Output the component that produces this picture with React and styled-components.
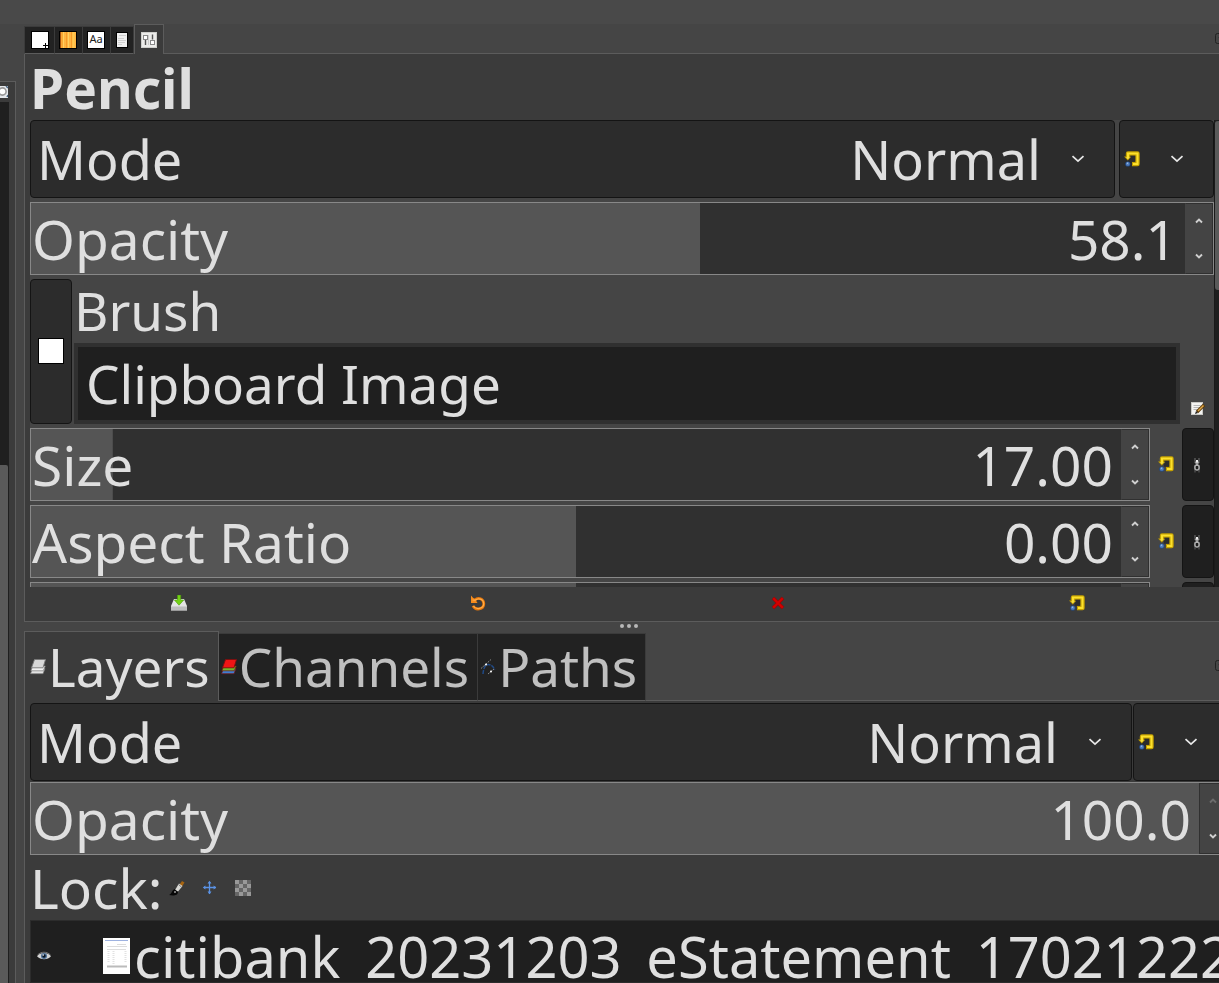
import React, { useState } from "react";
import styled, { createGlobalStyle } from "styled-components";

const GlobalStyle = createGlobalStyle`
  * {
    box-sizing: border-box;
  }

  body {
    margin: 0;
    background: #454545;
    overflow: hidden;
  }

  button, input, select {
    font: inherit;
    color: inherit;
    margin: 0;
    padding: 0;
    border: 0;
    background: none;
    outline: none;
  }

  svg {
    display: block;
    flex: none;
  }
`;

const Shell = styled.div`
  display: flex;
  flex-direction: column;
  height: 100vh;
  overflow: hidden;
  background: #454545;
  color: #dfdfdf;
  font-family: "Noto Sans", sans-serif;
  font-size: 55px;
  line-height: 66px;
  white-space: nowrap;
`;

const TopBar = styled.div`
  flex: none;
  height: 24px;
  background: #494949;
`;

const Columns = styled.div`
  display: flex;
  flex: 1;
  min-height: 0;
  gap: 8px;
`;

/* Left dock, only its right edge is on screen */
const SideDock = styled.aside`
  display: flex;
  flex-direction: column;
  flex: none;
  width: 16px;
  margin-top: 57px;
  padding-right: 6px;
  background: #3b3b3b;
  border: solid #5c5c5c;
  border-width: 1px 1px 0 0;
`;

const SideTab = styled.div`
  height: 20px;
  padding-top: 4px;
  background: #3b3b3b;
`;

const SideTrack = styled.div`
  flex: 1;
  padding-top: 363px;
  background: #1f1f1f;
  border-right: 1px solid #1f1f1f;
`;

const SideThumb = styled.div`
  height: 100%;
  background: #5a5a5a;
  border-radius: 0 2px 0 0;
`;

const Docks = styled.main`
  display: flex;
  flex-direction: column;
  flex: 1;
  min-width: 0;
  margin-right: -14px;
`;

const TabStrip = styled.div`
  display: flex;
  flex: none;
`;

const TabFiller = styled.div`
  display: flex;
  flex: 1;
  align-items: center;
  justify-content: flex-end;
  padding-right: 5px;
  border-bottom: 1px solid #5c5c5c;
`;

const IconTab = styled.button`
  display: flex;
  align-items: center;
  height: ${props => props.$active ? "30px" : "28px"};
  margin-top: ${props => props.$active ? "0" : "2px"};
  padding: ${props => props.$active ? "0 6px" : "0 5px 0 4px"};
  background: ${props => props.$active ? "#3b3b3b" : "#222"};
  border: solid ${props => props.$active ? "#5c5c5c" : "#3b3b3b"};
  border-width: ${props => props.$active ? "1px 1px 0" : "1px 1px 1px 0"};
  border-bottom-color: #5c5c5c;

  &:first-child {
    padding-left: 6px;
    border-left-width: 1px;
  }
`;

const TextTab = styled.button`
  display: flex;
  align-items: center;
  height: ${props => props.$active ? "70px" : "68px"};
  margin-top: ${props => props.$active ? "0" : "2px"};
  padding: 0 8px 0 ${props => props.$active ? "5px" : "2px"};
  gap: 2px;
  font-size: 53px;
  color: ${props => props.$active ? "#dfdfdf" : "#c0c0c0"};
  background: ${props => props.$active ? "#3b3b3b" : "#222"};
  border: solid ${props => props.$active ? "#5c5c5c" : "#3b3b3b"};
  border-width: ${props => props.$active ? "1px 1px 0" : "1px 1px 1px 0"};
  border-bottom-color: #5c5c5c;
`;

const ToolPage = styled.section`
  flex: none;
  padding: 0 5px;
  background: #3b3b3b;
  border: solid #5c5c5c;
  border-width: 0 0 1px 1px;
`;

const LayerPage = styled.section`
  display: flex;
  flex-direction: column;
  flex: 1;
  min-height: 0;
  padding: 2px 5px 0;
  gap: 1px;
  background: #3b3b3b;
  border-left: 1px solid #5c5c5c;
`;

const Title = styled.h1`
  margin: 0;
  padding-top: 1px;
  font-size: 55px;
  font-weight: 700;
  line-height: 65px;
`;

const ScrollArea = styled.div`
  display: flex;
  height: 467px;
  overflow: hidden;
`;

const Options = styled.div`
  display: flex;
  flex-direction: column;
  flex: 1;
  min-width: 0;
  gap: 4px;
  background: #454545;
`;

const ScrollTrack = styled.div`
  flex: none;
  width: 14px;
  background: #1f1f1f;
  border-left: 1px solid #1a1a1a;
`;

const ScrollThumb = styled.div`
  height: 170px;
  background: #5a5a5a;
  border: 1px solid #1a1a1a;
  border-width: 1px 1px 0 0;
  border-radius: 3px;
`;

const Row = styled.div`
  display: flex;
  flex: none;
  gap: ${props => props.$gap || 0}px;
`;

const ModeBox = styled.div`
  display: flex;
  flex: 1;
  align-items: center;
  min-width: 0;
  height: 78px;
  padding: 0 29px 0 6px;
  font-size: 54px;
  background: #2c2c2c;
  border: 1px solid #141414;
  border-radius: 4px;
`;

const ModeSelect = styled.select`
  flex: 1;
  min-width: 0;
  height: 76px;
  margin-right: 30px;
  appearance: none;
  text-align: right;
  text-align-last: right;

  option {
    background: #2c2c2c;
  }
`;

const ModeReset = styled.button`
  display: flex;
  align-items: center;
  justify-content: space-between;
  flex: none;
  width: 95px;
  height: 78px;
  padding: 0 29px 0 4px;
  background: #2c2c2c;
  border: 1px solid #141414;
  border-radius: 4px;
`;

const ScaleBox = styled.div`
  display: flex;
  flex: 1;
  min-width: 0;
  height: 73px;
  background: #303030;
  border: 1px solid #888;
`;

const ScaleFill = styled.div`
  display: flex;
  flex: 1;
  align-items: center;
  min-width: 0;
  padding: 0 8px 0 1px;
  background: linear-gradient(#555, #555) 0 0 / ${props => props.$fill}% 100% no-repeat;
`;

const ScaleInput = styled.input`
  flex: 1;
  min-width: 0;
  height: 71px;
  text-align: right;
`;

const Steppers = styled.div`
  display: flex;
  flex-direction: column;
  flex: none;
  width: 28px;
  background: #444;
  border: 1px solid #303030;
  border-left-color: ${props => props.$full ? "#303030" : "#444"};
`;

const Stepper = styled.button`
  display: flex;
  flex: 1;
  align-items: center;
  justify-content: center;
  color: ${props => props.disabled ? "#6c6c6c" : "#cfcfcf"};
`;

const BrushButton = styled.button`
  display: flex;
  align-items: center;
  justify-content: center;
  flex: none;
  width: 42px;
  padding-bottom: 2px;
  background: #2c2c2c;
  border: 1px solid #141414;
  border-radius: 4px;
`;

const BrushSwatch = styled.span`
  width: 26px;
  height: 26px;
  background: #fff;
  border: 1px solid #000;
`;

const BrushField = styled.div`
  display: flex;
  flex-direction: column;
  flex: 1;
  min-width: 0;
  font-size: 53px;

  label {
    line-height: 64px;
  }
`;

const BrushInput = styled.input`
  height: 81px;
  padding: 0 8px;
  background: #1f1f1f;
  border: 4px solid #303030;
`;

const FlatButton = styled.button`
  display: flex;
  align-items: ${props => props.$low ? "flex-end" : "center"};
  justify-content: center;
  flex: none;
  width: ${props => props.$width}px;
  padding-bottom: ${props => props.$low ? "8px" : "2px"};
`;

const ChainButton = styled.button`
  display: flex;
  align-items: center;
  flex: none;
  width: 32px;
  padding-left: 9px;
  background: #1f1f1f;
  border: 1px solid #141414;
  border-radius: 4px;
`;

const ActionBar = styled.div`
  display: grid;
  grid-template-columns: repeat(4, 1fr);
  height: 34px;

  button {
    display: flex;
    align-items: center;
    justify-content: center;
    padding: 0 2px 2px 0;
  }
`;

const PaneHandle = styled.div`
  display: flex;
  align-items: center;
  justify-content: center;
  flex: none;
  gap: 3px;
  height: 9px;
  padding-bottom: 1px;

  span {
    width: 4px;
    height: 4px;
    border-radius: 50%;
    background: #b8b8b8;
  }
`;

const LockRow = styled.div`
  display: flex;
  align-items: center;
  flex: none;
  height: 63px;
  line-height: 64px;

  button {
    display: flex;
    width: 16px;
    margin-right: 17px;
  }
`;

const LockLabel = styled.span`
  margin-right: 6px;
`;

const LayerList = styled.ul`
  flex: 1;
  min-height: 0;
  margin: 0;
  padding: 0;
  list-style: none;
  overflow: hidden;
  background: #1f1f1f;
  border: 1px solid #2c2c2c;
`;

const LayerItem = styled.li`
  display: flex;
  align-items: center;
  height: 70px;
  font-size: 56px;
  line-height: 68px;
`;

const EyeButton = styled.button`
  display: flex;
  flex: none;
  width: 72px;
  padding-left: 6px;
`;

const LayerName = styled.span`
  margin-left: 4px;
`;

const ResetIcon = () => (
  <svg width="16" height="16" viewBox="0 0 16 16" aria-hidden="true">
    <path d="M4 6.500V2.500h9.500v10.500H8" fill="none" stroke="#c4a000" strokeWidth="4.400" strokeLinejoin="round" />
    <path d="M0 5.600h7.400L3.800 9.400z" fill="#c4a000" />
    <path d="M4 6.500V2.500h9.500v10.500H9" fill="none" stroke="#fce02c" strokeWidth="2" />
    <path d="M2 6.300h3.800L3.900 8.200z" fill="#fce94f" />
    <path d="M6.300 4.800h4.800v5.900H5.800V8.200l1.800-2.500H6.300z" fill="#2c2c2c" />
    <circle cx="3.800" cy="13" r="2.600" fill="#204a87" />
    <circle cx="3.800" cy="12.900" r="1.900" fill="#5580be" />
    <circle cx="3.500" cy="12.300" r="0.700" fill="#9ebfe8" />
  </svg>
);

const ArrowDown = () => (
  <svg width="14" height="8" viewBox="0 0 14 8" aria-hidden="true">
    <path d="M1.500 1.200L7 6.200l5.500-5" fill="none" stroke="#e8e8e8" strokeWidth="1.700" />
  </svg>
);

const StepIcon = ({ up }) => (
  <svg width="8" height="6" viewBox="0 0 8 6" aria-hidden="true">
    <path d={up ? "M1 4.500L4 1.500l3 3" : "M1 1.500l3 3 3-3"} fill="none" stroke="currentColor" strokeWidth="1.900" />
  </svg>
);

const ChainIcon = () => (
  <svg width="10" height="16" viewBox="0 0 10 16" aria-hidden="true">
    <path d="M3 1v3M7 1v3" stroke="#666" strokeWidth="1.200" />
    <path d="M5 3v6" stroke="#eee" strokeWidth="2" />
    <path d="M2.800 4.500L5 7.500l2.200-3" fill="none" stroke="#999" strokeWidth="1.300" />
    <rect x="2.900" y="8" width="4.200" height="5" rx="2" fill="none" stroke="#aaa" strokeWidth="1.600" />
    <path d="M3 13v2.500M7 13v2.500" stroke="#555" strokeWidth="1.200" />
  </svg>
);

const EditIcon = () => (
  <svg width="14" height="14" viewBox="0 0 14 14" aria-hidden="true">
    <rect x="0.500" y="0.500" width="11" height="12" fill="#f4f4f2" stroke="#c9c9c5" />
    <path d="M2.500 3.500h7M2.500 5.500h6M2.500 7.500h4" stroke="#b8b8b8" />
    <path d="M6 10L13 3" stroke="#5c3a08" strokeWidth="3.200" />
    <path d="M7 9L12.500 3.500" stroke="#e0a94c" strokeWidth="1.500" />
    <path d="M4 12l1-3 2 2z" fill="#222" />
  </svg>
);

const SaveIcon = () => (
  <svg width="16" height="16" viewBox="0 0 16 16" aria-hidden="true">
    <path d="M3 4h10l3 7v5H0v-5z" fill="#e4e4e4" />
    <path d="M0 11.500h16V16H0z" fill="#bdbdbd" />
    <path d="M0 15.500h16" stroke="#999" />
    <path d="M6.500 0h3.200v5h3L8 10.200 3.400 5h3.100z" fill="#73d216" stroke="#4e9a06" strokeWidth="0.600" />
  </svg>
);

const UndoIcon = () => (
  <svg width="16" height="16" viewBox="0 0 16 16" aria-hidden="true">
    <path d="M5 5C8 1.800 13.800 3.500 13.800 8.800c0 6-8.600 7-10.800 1.900" fill="none" stroke="#e8770a" strokeWidth="2.800" />
    <path d="M1 .5l2 2.200L5 4l2.500 4H1z" fill="#f58a1c" />
    <path d="M2.500 5L5 5.300C8 2.500 13.700 3.800 13.700 8.800c-.1 5.200-7.900 6.400-10.300 2.200" fill="none" stroke="#ffad4a" strokeWidth="1.200" />
  </svg>
);

const DeleteIcon = () => (
  <svg width="14" height="14" viewBox="0 0 14 14" aria-hidden="true">
    <path d="M2 2l10 10M12 2L2 12" stroke="#a40000" strokeWidth="3.400" />
    <path d="M2.300 2.300l9.400 9.400M11.700 2.300l-9.400 9.400" stroke="#d40000" strokeWidth="2" />
  </svg>
);

const MenuIcon = () => (
  <svg width="13" height="12" viewBox="0 0 13 12" aria-hidden="true">
    <rect x="0.500" y="0.500" width="12" height="10" rx="2" fill="none" stroke="#222" />
    <path d="M3 4.500h7l-3.500 3z" fill="#222" />
  </svg>
);

const StackIcon = ({ top, middle, bottom, edge }) => (
  <svg width="16" height="16" viewBox="0 0 16 16" aria-hidden="true">
    <path d="M2.500 9.500h12.500L13 14.700H.5z" fill={bottom} stroke={edge} strokeWidth="0.700" />
    <path d="M2.800 7h12.500L13.200 11.800H.8z" fill={middle} stroke={edge} strokeWidth="0.700" />
    <path d="M4.500 .5h11L13 8.800H1.500z" fill={top} stroke={edge} strokeWidth="0.900" />
  </svg>
);

const PathsIcon = () => (
  <svg width="16" height="16" viewBox="0 0 16 16" aria-hidden="true">
    <path d="M3 15C3.500 8 6 5.500 8.500 5.500S14 8 14.500 11" fill="none" stroke="#204a87" strokeWidth="1.500" strokeDasharray="4 1" />
    <path d="M1 9.500L11 .5M8 15l6-5" stroke="#888" strokeDasharray="2 1" />
    <circle cx="6" cy="5.500" r="1" fill="#fff" />
    <circle cx="11" cy="12.500" r="1" fill="#fff" />
  </svg>
);

const BrushTabIcon = () => (
  <svg width="18" height="18" viewBox="0 0 18 18" aria-hidden="true">
    <rect x="0.500" y="0.500" width="17" height="17" fill="#fff" stroke="#000" />
    <path d="M14.500 12v5M12 14.500h5" stroke="#000" />
  </svg>
);

const PatternTabIcon = () => (
  <svg width="18" height="18" viewBox="0 0 18 18" aria-hidden="true">
    <rect x="0.500" y="0.500" width="17" height="17" fill="#ffb340" stroke="#000" />
    <path d="M1.500 1v16" stroke="#a85410" />
    <path d="M4.500 1v16M9.500 1v16" stroke="#ffd060" />
    <path d="M3 1v16M7.500 1v16M12.500 1v16" stroke="#f59a28" />
    <path d="M14.500 1v16" stroke="#ffc850" strokeWidth="2" />
  </svg>
);

const FontTabIcon = () => (
  <svg width="18" height="18" viewBox="0 0 18 18" aria-hidden="true">
    <rect x="0.500" y="0.500" width="17" height="17" fill="#fff" stroke="#000" />
    <text x="9" y="12" fontSize="11" textAnchor="middle" fill="#222">Aa</text>
  </svg>
);

const DocumentTabIcon = () => (
  <svg width="13" height="16" viewBox="0 0 13 16" aria-hidden="true">
    <rect x="1.500" y="0.500" width="11" height="15" fill="#f0f0f0" stroke="#000" />
    <path d="M4 3.500h7M3 6.500h6M3 8.500h8M3 10.500h7M3 12.500h4" stroke="#d0d0d0" />
  </svg>
);

const OptionsTabIcon = () => (
  <svg width="16" height="16" viewBox="0 0 16 16" aria-hidden="true">
    <rect x="0.500" y="0.500" width="15" height="15" fill="#ececea" stroke="#cfcfcc" />
    <path d="M4.500 8v5M11.500 2.500v5" stroke="#555" strokeWidth="1.400" />
    <rect x="2.500" y="3.500" width="4" height="4" fill="#fff" stroke="#888" />
    <rect x="9.500" y="8.500" width="4" height="4" fill="#fff" stroke="#888" />
    <path d="M7.500 3v10" stroke="#ccc" />
  </svg>
);

const SideTabIcon = () => (
  <svg width="8" height="12" viewBox="0 0 8 12" aria-hidden="true">
    <rect width="8" height="12" fill="#e6e9ec" />
    <circle cx="2.500" cy="5.500" r="3.600" fill="#fff" stroke="#999" strokeWidth="1.600" />
    <path d="M6 0l2 2M7 11l1-2" stroke="#4a6684" strokeWidth="1.500" />
  </svg>
);

const PaintIcon = () => (
  <svg width="16" height="16" viewBox="0 0 16 16" aria-hidden="true">
    <path d="M10.500 4.500L13 1l2.500 1.500-2.500 4z" fill="#a66410" />
    <path d="M6 10l4-6.500 3.500 2.500-4.500 5.500z" fill="#d8d8d4" />
    <path d="M9.500 4.500l3 2.500" stroke="#777" />
    <path d="M0 15c3-1 2.500-4.500 5.500-6l3.500 3c0 3.500-4.500 4-9 3z" fill="#080808" />
    <circle cx="6" cy="12" r="1" fill="#999" />
  </svg>
);

const MoveIcon = () => (
  <svg width="16" height="16" viewBox="0 0 16 16" aria-hidden="true">
    <path d="M7.500 2v12M2 7.500h12" stroke="#5b93e6" strokeWidth="1.300" />
    <path d="M7.500 .8l2 2.600h-4zM7.500 14.200l2-2.600h-4zM.8 7.500l2.600-2v4zM14.200 7.500l-2.600-2v4z" fill="#5b93e6" />
  </svg>
);

const AlphaIcon = () => (
  <svg width="16" height="16" viewBox="0 0 16 16" aria-hidden="true">
    <rect width="16" height="16" fill="#666" />
    <path d="M0 0h4v4H0zM8 0h4v4H8zM4 4h4v4H4zM12 4h4v4h-4zM0 8h4v4H0zM8 8h4v4H8zM4 12h4v4H4zM12 12h4v4h-4z" fill="#999" />
  </svg>
);

const EyeIcon = () => (
  <svg width="14" height="10" viewBox="0 0 14 10" aria-hidden="true">
    <path d="M0 5.200C3 1.200 10.500.8 14 5.200 11 9 3.500 9.200 0 5.200z" fill="#d4d4d4" />
    <path d="M.5 4C4 .3 10 .3 13.500 4" fill="none" stroke="#777" />
    <circle cx="7" cy="5" r="3" fill="#4f7096" />
    <circle cx="7" cy="5" r="1.700" fill="#0b1622" />
    <circle cx="6.200" cy="4" r="0.800" fill="#fff" />
  </svg>
);

const LayerPreview = () => (
  <svg width="27" height="36" viewBox="0 0 27 36" aria-hidden="true">
    <rect width="27" height="36" fill="#fff" />
    <path d="M2 2.500h23" stroke="#9eb2e0" />
    <path d="M4 8.500h20M14 6.500h9M4 11.500h19" stroke="#ddd" />
    <path d="M5.500 13v12M10.500 13v14M22.500 13v12" stroke="#e2e2e2" strokeWidth="2" strokeDasharray="1 1" />
    <path d="M4 28.500h20" stroke="#bbb" strokeWidth="2" />
  </svg>
);

const ModeRow = ({ id, gap }) => {
  const [mode, setMode] = useState("Normal");

  return (
    <Row $gap={gap}>
      <ModeBox>
        <label htmlFor={id}>Mode</label>
        <ModeSelect id={id} value={mode} onChange={(e) => setMode(e.target.value)}>
          <option>Normal</option>
        </ModeSelect>
        <ArrowDown />
      </ModeBox>
      <ModeReset aria-label="Switch mode group">
        <ResetIcon />
        <ArrowDown />
      </ModeReset>
    </Row>
  );
};

const Scale = ({ id, label, initial, fill }) => {
  const [value, setValue] = useState(initial);

  return (
    <ScaleBox>
      <ScaleFill $fill={fill}>
        {label && <label htmlFor={id}>{label}</label>}
        <ScaleInput
          id={id}
          size="1"
          aria-label={label ? undefined : "Angle"}
          value={value}
          onChange={(e) => setValue(e.target.value)}
        />
      </ScaleFill>
      <Steppers $full={fill === 100}>
        <Stepper aria-label="Increase" disabled={fill === 100}><StepIcon up /></Stepper>
        <Stepper aria-label="Decrease"><StepIcon /></Stepper>
      </Steppers>
    </ScaleBox>
  );
};

const LinkedScale = (props) => (
  <Row>
    <Scale {...props} />
    <FlatButton $width={32} aria-label="Reset"><ResetIcon /></FlatButton>
    <ChainButton aria-label="Link to brush"><ChainIcon /></ChainButton>
  </Row>
);

const App = () => {
  const [brush, setBrush] = useState("Clipboard Image");

  return (
    <Shell>
      <GlobalStyle />
      <TopBar />
      <Columns>
        <SideDock>
          <SideTab><SideTabIcon /></SideTab>
          <SideTrack><SideThumb /></SideTrack>
        </SideDock>

        <Docks>
          {/* Tool options */}
          <TabStrip>
            <IconTab aria-label="Brushes"><BrushTabIcon /></IconTab>
            <IconTab aria-label="Patterns"><PatternTabIcon /></IconTab>
            <IconTab aria-label="Fonts"><FontTabIcon /></IconTab>
            <IconTab aria-label="Document history"><DocumentTabIcon /></IconTab>
            <IconTab $active aria-label="Tool options"><OptionsTabIcon /></IconTab>
            <TabFiller>
              <button aria-label="Configure tab"><MenuIcon /></button>
            </TabFiller>
          </TabStrip>
          <ToolPage>
            <Title>Pencil</Title>
            <ScrollArea>
              <Options>
                <ModeRow id="tool-mode" gap={4} />
                <Row>
                  <Scale id="tool-opacity" label="Opacity" initial="58.1" fill={58} />
                </Row>
                <Row $gap={2}>
                  <BrushButton aria-label="Choose brush"><BrushSwatch /></BrushButton>
                  <BrushField>
                    <label htmlFor="brush">Brush</label>
                    <BrushInput id="brush" value={brush} onChange={(e) => setBrush(e.target.value)} />
                  </BrushField>
                  <FlatButton $low $width={32} aria-label="Edit brush"><EditIcon /></FlatButton>
                </Row>
                <LinkedScale id="size" label="Size" initial="17.00" fill={7.5} />
                <LinkedScale id="aspect" label="Aspect Ratio" initial="0.00" fill={50} />
                {/* mostly scrolled out of view */}
                <LinkedScale id="angle" initial="" fill={50} />
              </Options>
              <ScrollTrack><ScrollThumb /></ScrollTrack>
            </ScrollArea>
            <ActionBar>
              <button aria-label="Save preset"><SaveIcon /></button>
              <button aria-label="Restore preset"><UndoIcon /></button>
              <button aria-label="Delete preset"><DeleteIcon /></button>
              <button aria-label="Reset to defaults"><ResetIcon /></button>
            </ActionBar>
          </ToolPage>

          <PaneHandle><span /><span /><span /></PaneHandle>

          {/* Layers */}
          <TabStrip>
            <TextTab $active>
              <StackIcon top="#d8d8d8" middle="#f2f2f2" bottom="#e2e2e2" edge="#777" />
              Layers
            </TextTab>
            <TextTab>
              <StackIcon top="#ef1515" middle="#73b82a" bottom="#3f7fd0" edge="#7a1010" />
              Channels
            </TextTab>
            <TextTab>
              <PathsIcon />
              Paths
            </TextTab>
            <TabFiller>
              <button aria-label="Configure tab"><MenuIcon /></button>
            </TabFiller>
          </TabStrip>
          <LayerPage>
            <ModeRow id="layer-mode" gap={1} />
            <Row>
              <Scale id="layer-opacity" label="Opacity" initial="100.0" fill={100} />
            </Row>
            <LockRow>
              <LockLabel>Lock:</LockLabel>
              <button aria-label="Lock pixels"><PaintIcon /></button>
              <button aria-label="Lock position"><MoveIcon /></button>
              <button aria-label="Lock alpha channel"><AlphaIcon /></button>
            </LockRow>
            <LayerList>
              <LayerItem>
                <EyeButton aria-label="Toggle visibility"><EyeIcon /></EyeButton>
                <LayerPreview />
                <LayerName>citibank_20231203_eStatement_17021222</LayerName>
              </LayerItem>
            </LayerList>
          </LayerPage>
        </Docks>
      </Columns>
    </Shell>
  );
};

export default App;
